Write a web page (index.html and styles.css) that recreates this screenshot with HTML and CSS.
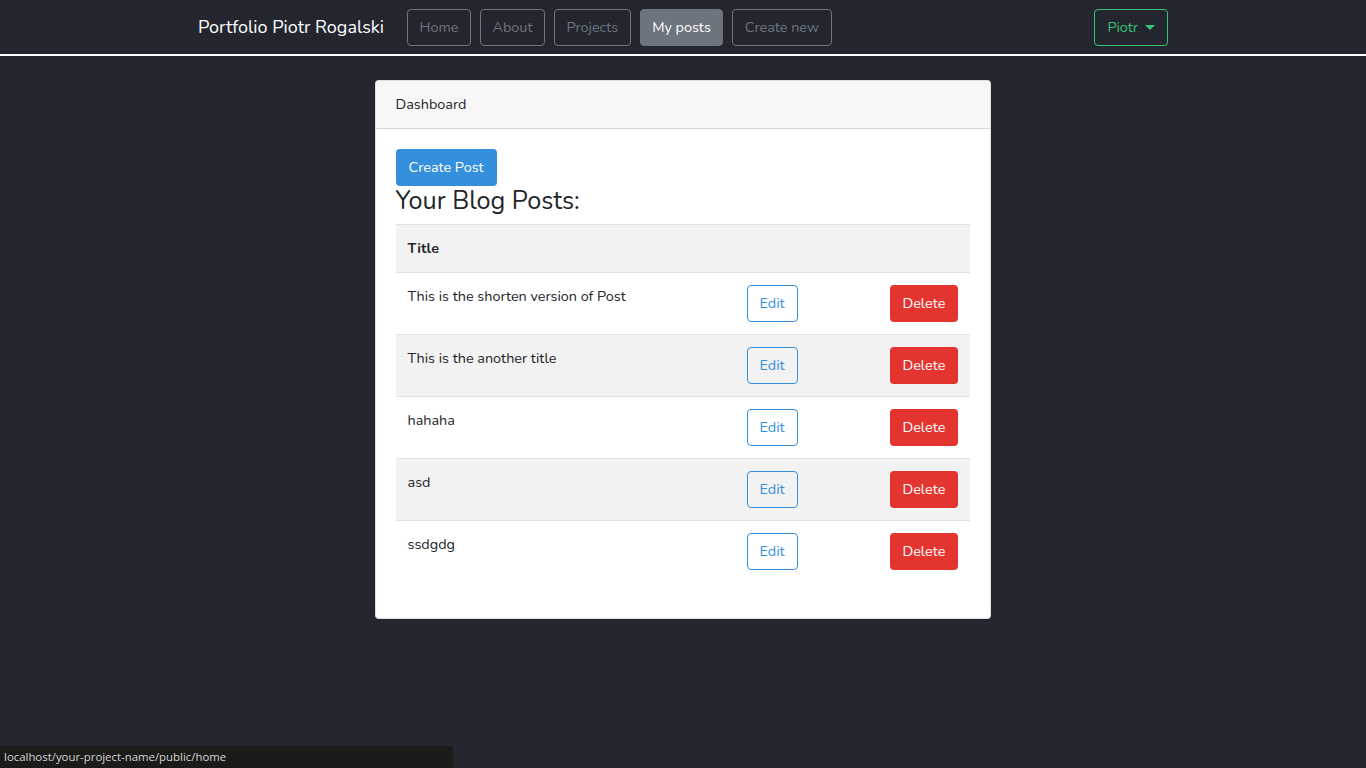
FILE: index.html
```html
<!DOCTYPE html>
<html lang="en">
<head>
<meta charset="utf-8">
<title>Portfolio Piotr Rogalski</title>
<link rel="stylesheet" href="styles.css">
</head>
<body>
<nav class="navbar">
  <div class="nav-inner">
    <a class="brand" href="#">Portfolio Piotr Rogalski</a>
    <ul class="nav-links">
      <li><a class="nav-btn" href="#">Home</a></li>
      <li><a class="nav-btn" href="#">About</a></li>
      <li><a class="nav-btn" href="#">Projects</a></li>
      <li><a class="nav-btn active" href="#">My posts</a></li>
      <li><a class="nav-btn" href="#">Create new</a></li>
    </ul>
    <a class="user-btn" href="#">Piotr <span class="caret"></span></a>
  </div>
</nav>

<main class="main">
  <div class="card">
    <div class="card-header">Dashboard</div>
    <div class="card-body">
      <a class="btn btn-primary" href="#">Create Post</a>
      <h3 class="heading">Your Blog Posts:</h3>
      <table class="table">
        <tbody>
          <tr><th class="col-title">Title</th><th class="col-edit"></th><th class="col-del"></th></tr>
          <tr><td>This is the shorten version of Post</td><td><a class="btn btn-edit" href="#">Edit</a></td><td><a class="btn btn-danger" href="#">Delete</a></td></tr>
          <tr><td>This is the another title</td><td><a class="btn btn-edit" href="#">Edit</a></td><td><a class="btn btn-danger" href="#">Delete</a></td></tr>
          <tr><td>hahaha</td><td><a class="btn btn-edit" href="#">Edit</a></td><td><a class="btn btn-danger" href="#">Delete</a></td></tr>
          <tr><td>asd</td><td><a class="btn btn-edit" href="#">Edit</a></td><td><a class="btn btn-danger" href="#">Delete</a></td></tr>
          <tr><td>ssdgdg</td><td><a class="btn btn-edit" href="#">Edit</a></td><td><a class="btn btn-danger" href="#">Delete</a></td></tr>
        </tbody>
      </table>
    </div>
  </div>
</main>

<div class="statusbar">localhost/your-project-name/public/home</div>
</body>
</html>
```

FILE: styles.css
```css
* { box-sizing: border-box; }
html, body { margin: 0; padding: 0; }
body {
  background: #23262f;
  font-family: "Nunito", "Lato", "Open Sans", sans-serif;
  font-size: 14.4px;
  line-height: 1.6;
  color: #212529;
  min-height: 768px;
}
a { text-decoration: none; }

.navbar {
  height: 56px;
  border-bottom: 2px solid #ffffff;
  background: #23262f;
}
.nav-inner {
  width: 970px;
  margin: 0 auto;
  height: 54px;
  display: flex;
  align-items: center;
}
.brand {
  color: #ffffff;
  font-size: 18px;
  margin-right: 23px;
}
.nav-links {
  list-style: none;
  margin: 0;
  padding: 0;
  display: flex;
  gap: 9px;
  flex: 1;
}
.nav-btn {
  display: block;
  height: 37px;
  padding: 6px 11.5px;
  border: 1px solid #6c757d;
  border-radius: 4px;
  color: #6c757d;
  font-size: 14.4px;
  line-height: 23px;
}
.nav-btn.active {
  background: #6c757d;
  color: #ffffff;
}
.user-btn {
  display: flex;
  align-items: center;
  height: 37px;
  padding: 6px 12px;
  border: 1px solid #38c172;
  border-radius: 4px;
  color: #38c172;
  font-size: 14.4px;
  line-height: 23px;
}
.caret {
  display: inline-block;
  margin-left: 7px;
  border-top: 5px solid #38c172;
  border-left: 5px solid transparent;
  border-right: 5px solid transparent;
}

.main {
  padding-top: 24px;
  display: flex;
  justify-content: center;
}
.card {
  width: 616px;
  background: #ffffff;
  border: 1px solid rgba(0,0,0,.125);
  border-radius: 4px;
  overflow: hidden;
  margin-right: 1px;
}
.card-header {
  background: #f7f7f7;
  border-bottom: 1px solid rgba(0,0,0,.125);
  padding: 12px 20px;
}
.card-body {
  padding: 20px;
}
.btn {
  display: inline-block;
  padding: 6px 12px;
  border: 1px solid transparent;
  border-radius: 4px;
  font-size: 14.4px;
  line-height: 23px;
  vertical-align: middle;
}
.btn-primary {
  background: #3490dc;
  color: #ffffff;
}
.btn-edit {
  border-color: #3490dc;
  color: #3490dc;
  background: transparent;
}
.btn-danger {
  background: #e3342f;
  color: #ffffff;
}
.heading {
  margin: 0 0 8px 0;
  font-size: 25.2px;
  font-weight: 400;
  line-height: 1.2;
}
.table {
  width: 100%;
  border-collapse: collapse;
  table-layout: fixed;
  margin-bottom: 16px;
}
.table th, .table td {
  padding: 12px;
  border-top: 1px solid #dee2e6;
  text-align: left;
  vertical-align: top;
}
.table th { font-weight: 700; }
.table tr:nth-child(odd) { background: #f2f2f2; }
.col-title { width: 339px; }
.col-edit { width: 143px; }
.col-del { width: 92px; }

.statusbar {
  position: fixed;
  left: 0;
  bottom: 0;
  width: 453px;
  height: 22px;
  background: #1b1b19;
  color: #d4d4d4;
  font-family: "Open Sans", sans-serif;
  font-size: 11.4px;
  line-height: 22px;
  padding-left: 4px;
  border-top-right-radius: 3px;
}
```
